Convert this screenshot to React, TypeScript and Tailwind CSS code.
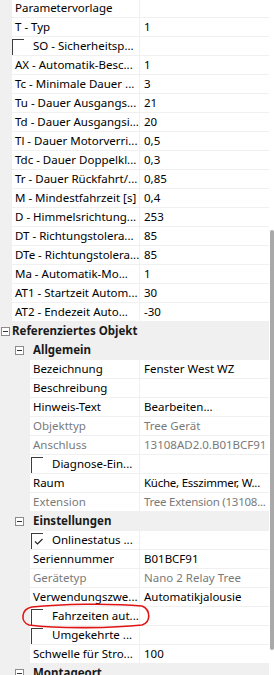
import React from "react";

type Prop = {
  kind: "prop";
  label: string;
  value?: string;
  indent: number;
  disabled?: boolean;
  check?: "empty" | "checked";
  tight?: boolean;
};
type Cat = { kind: "cat"; label: string; level: number };
type Row = Prop | Cat;

const P = (label: string, value = "", extra: Partial<Prop> = {}): Prop => ({
  kind: "prop",
  label,
  value,
  indent: 12,
  ...extra,
});
const N = (label: string, value = "", extra: Partial<Prop> = {}): Prop => ({
  kind: "prop",
  label,
  value,
  indent: 30,
  ...extra,
});

const rows: Row[] = [
  P("Parametervorlage"),
  P("T - Typ", "1"),
  P("SO - Sicherheitsp...", "", { check: "empty" }),
  P("AX - Automatik-Besc...", "1"),
  P("Tc - Minimale Dauer ...", "3"),
  P("Tu - Dauer Ausgangs...", "21"),
  P("Td - Dauer Ausgangsi...", "20"),
  P("Tl - Dauer Motorverri...", "0,5"),
  P("Tdc - Dauer Doppelkl...", "0,3"),
  P("Tr - Dauer Rückfahrt/...", "0,85"),
  P("M - Mindestfahrzeit [s]", "0,4"),
  P("D - Himmelsrichtung...", "253"),
  P("DT - Richtungstolera...", "85"),
  P("DTe - Richtungstolera...", "85"),
  P("Ma - Automatik-Mo...", "1"),
  P("AT1 - Startzeit Autom...", "30"),
  P("AT2 - Endezeit Auto...", "-30"),
  { kind: "cat", label: "Referenziertes Objekt", level: 0 },
  { kind: "cat", label: "Allgemein", level: 1 },
  N("Bezeichnung", "Fenster West WZ"),
  N("Beschreibung"),
  N("Hinweis-Text", "Bearbeiten..."),
  N("Objekttyp", "Tree Gerät", { disabled: true }),
  N("Anschluss", "13108AD2.0.B01BCF91", { disabled: true }),
  N("Diagnose-Ein...", "", { check: "empty" }),
  N("Raum", "Küche, Esszimmer, W...", { tight: true }),
  N("Extension", "Tree Extension (13108...", { disabled: true, tight: true }),
  { kind: "cat", label: "Einstellungen", level: 1 },
  N("Onlinestatus ...", "", { check: "checked" }),
  N("Seriennummer", "B01BCF91"),
  N("Gerätetyp", "Nano 2 Relay Tree", { disabled: true }),
  N("Verwendungszwe...", "Automatikjalousie"),
  N("Fahrzeiten aut...", "", { check: "empty" }),
  N("Umgekehrte ...", "", { check: "empty" }),
  N("Schwelle für Stro...", "100"),
  { kind: "cat", label: "Montageort", level: 1 },
];

function Minus() {
  return (
    <div className="w-[9px] h-[9px] border border-[#8c8c8c] bg-white flex items-center justify-center shrink-0">
      <div className="w-[5px] h-px bg-[#333]" />
    </div>
  );
}

function CheckBox({ checked }: { checked: boolean }) {
  return (
    <div className="relative w-[12px] h-[16px] mt-[2px] self-start border-l border-t border-[#3c3c3c] shrink-0">
      {checked && (
        <svg className="absolute left-[2px] top-[4px]" width="10" height="8" viewBox="0 0 10 8">
          <path d="M1 3.5 L3.5 6 L8.5 1" fill="none" stroke="#222" strokeWidth="1.1" />
        </svg>
      )}
    </div>
  );
}

function CatRow({ r }: { r: Cat }) {
  return (
    <div className="h-[19px] flex items-center bg-[#f0f0f0] border-b border-[#f0f0f0]">
      {r.level === 0 ? (
        <div className="flex items-center pl-[1px]">
          <Minus />
          <span className="ml-[2px] font-bold text-[#1a1a1a] whitespace-nowrap">{r.label}</span>
        </div>
      ) : (
        <div className="flex items-center pl-[15px]">
          <Minus />
          <span className="ml-[9px] font-bold text-[#1a1a1a] whitespace-nowrap">{r.label}</span>
        </div>
      )}
    </div>
  );
}

function PropRow({ r }: { r: Prop }) {
  const txt = r.disabled ? "text-[#7a7a7a]" : "text-black";
  return (
    <div className="h-[19px] flex border-b border-[#f0f0f0]">
      <div className="bg-[#f0f0f0] shrink-0" style={{ width: r.indent }} />
      <div className="flex items-center overflow-hidden shrink-0" style={{ width: 139 - r.indent }}>
        {r.check ? (
          <>
            <div className={r.indent === 12 ? "ml-0" : "ml-[1px]"}>
              <CheckBox checked={r.check === "checked"} />
            </div>
            <span className={`ml-[9px] whitespace-nowrap ${txt}`}>{r.label}</span>
          </>
        ) : (
          <span className={`pl-[3px] whitespace-nowrap ${txt}`}>{r.label}</span>
        )}
      </div>
      <div className="w-px bg-[#f0f0f0] shrink-0" />
      <div className="flex-1 flex items-center overflow-hidden">
        <span
          className={`pl-[4px] whitespace-nowrap ${txt} ${r.tight ? "tracking-[-0.25px]" : ""}`}
        >
          {r.value}
        </span>
      </div>
    </div>
  );
}

export default function App() {
  return (
    <div
      className="relative w-[274px] h-[675px] overflow-hidden bg-white flex text-[11.5px] leading-[18px]"
      style={{ fontFamily: '"Segoe UI", "Noto Sans", "Liberation Sans", sans-serif' }}
    >
      <div className="w-[269px] shrink-0 -mt-px">
        {rows.map((r, i) =>
          r.kind === "cat" ? <CatRow key={i} r={r} /> : <PropRow key={i} r={r} />
        )}
      </div>
      <div className="flex-1 relative bg-white">
        <div className="absolute left-[1px] top-[230px] w-[4px] h-[420px] rounded-full bg-[#a9a9a9]" />
      </div>
      <svg className="absolute left-0 top-0 pointer-events-none" width="274" height="675" viewBox="0 0 274 675">
        <path
          d="M142 606 C 110 603, 60 604, 32 607 C 21 609, 20 622, 29 625 C 60 629, 115 628, 142 625 C 151 622, 151 610, 142 606"
          fill="none"
          stroke="#e01414"
          strokeWidth="1.6"
        />
      </svg>
    </div>
  );
}
